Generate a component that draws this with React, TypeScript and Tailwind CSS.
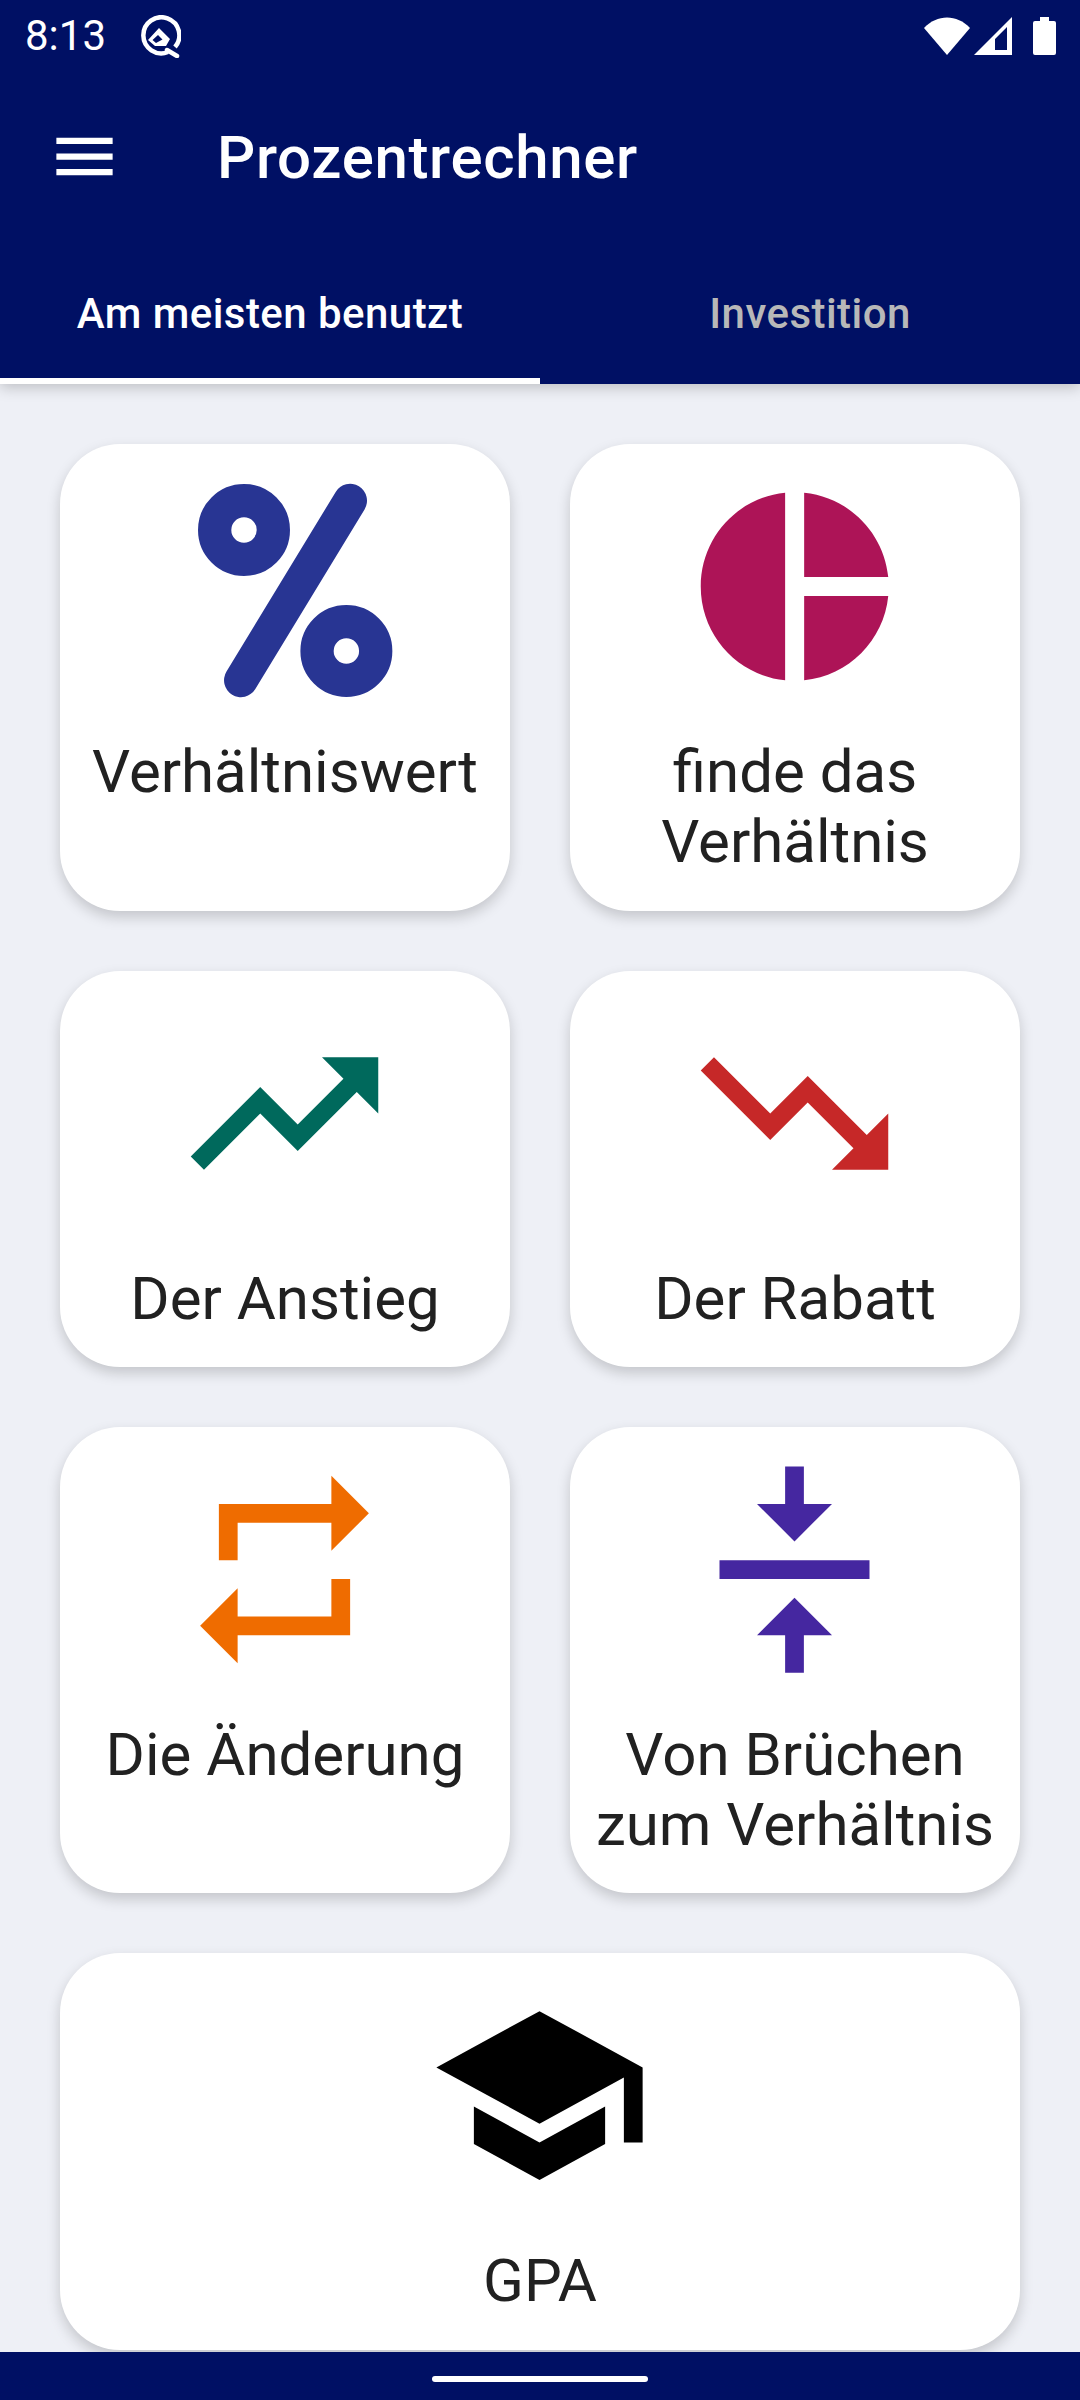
import type { ReactNode } from "react";

type Shortcut = {
  label: string;
  color: string;
  icon: ReactNode;
  wide?: boolean;
};

function PercentGlyph() {
  return (
    <>
      <circle cx="7.68" cy="5.97" r="3.13" fill="none" stroke="currentColor" strokeWidth="3.55" />
      <circle cx="18.6" cy="18.88" r="3.13" fill="none" stroke="currentColor" strokeWidth="3.55" />
      <line x1="19" y1="2.85" x2="7.35" y2="22" stroke="currentColor" strokeWidth="3.6" strokeLinecap="round" />
    </>
  );
}

const shortcuts: Shortcut[] = [
  { label: "Verhältniswert", color: "text-[#283593]", icon: <PercentGlyph /> },
  {
    label: "finde das Verhältnis",
    color: "text-[#ad1457]",
    icon: <path d="M11 2v20c-5.07-.5-9-4.79-9-10s3.93-9.5 9-10zm2.03 0v8.99H22c-.47-4.74-4.24-8.52-8.97-8.99zm0 11.01V22c4.74-.47 8.5-4.25 8.97-8.99h-8.97z" />,
  },
  {
    label: "Der Anstieg",
    color: "text-[#00695c]",
    icon: <path d="M16 6l2.29 2.29-4.88 4.88-4-4L2 16.59 3.41 18l6-6 4 4 6.3-6.29L22 12V6z" />,
  },
  {
    label: "Der Rabatt",
    color: "text-[#c62828]",
    icon: <path d="M16 18l2.29-2.29-4.88-4.88-4 4L2 7.41 3.41 6l6 6 4-4 6.3 6.29L22 12v6z" />,
  },
  {
    label: "Die Änderung",
    color: "text-[#ef6c00]",
    icon: <path d="M7 7h10v3l4-4-4-4v3H5v6h2V7zm10 10H7v-3l-4 4 4 4v-3h12v-6h-2v4z" />,
  },
  {
    label: "Von Brüchen zum Verhältnis",
    color: "text-[#4527a0]",
    icon: <path d="M8 19h3v4h2v-4h3l-4-4-4 4zm8-14h-3V1h-2v4H8l4 4 4-4zM4 11v2h16v-2H4z" />,
  },
  {
    label: "GPA",
    color: "text-black",
    wide: true,
    icon: <path d="M5 13.18v4L12 21l7-3.82v-4L12 17l-7-3.82zM12 3L1 9l11 6 9-4.91V17h2V9L12 3z" />,
  },
];

function StatusBar() {
  return (
    <div className="flex h-[72px] items-center justify-between pl-[25px] pr-[24px] text-white">
      <div className="flex items-center gap-[34px]">
        <span className="text-[42px] leading-none">8:13</span>
        <svg viewBox="0 0 41 43" className="h-[43px] w-[41px]">
          <path d="M28 37 A18 18 0 1 1 35 32" fill="none" stroke="white" strokeWidth="4.5" />
          <path d="M27 35 L37 41" stroke="white" strokeWidth="4.5" strokeLinecap="round" />
          <path
            fillRule="evenodd"
            d="M19 13 L30 24 L26 31 L15 31 L8 25 Z M18 20 L12.5 25 L16 28 L22.5 24.5 Z"
            fill="white"
          />
        </svg>
      </div>
      <div className="flex items-center">
        <svg viewBox="0 0 46 38" className="h-[38px] w-[46px]">
          <path d="M0 11 C13 -3 33 -3 46 11 L23 38 Z" fill="white" />
        </svg>
        <svg viewBox="0 0 38 38" className="ml-[4px] h-[38px] w-[38px]">
          <path fillRule="evenodd" d="M38 0 V38 H0 Z M33 10 L21 22 V33 H33 Z" fill="white" />
        </svg>
        <svg viewBox="0 0 23 38" className="ml-[21px] h-[38px] w-[23px]">
          <path d="M7 0 H16 V4 H21 A2 2 0 0 1 23 6 V36 A2 2 0 0 1 21 38 H2 A2 2 0 0 1 0 36 V6 A2 2 0 0 1 2 4 H7 Z" fill="white" />
        </svg>
      </div>
    </div>
  );
}

function Header() {
  return (
    <header className="z-10 bg-[#001064] shadow-[0_3px_14px_rgba(0,0,0,0.22)]">
      <StatusBar />
      <div className="flex h-[168px] items-center pl-[47px] text-white">
        <svg viewBox="0 0 24 24" fill="white" className="h-[75px] w-[75px]">
          <path d="M3 18h18v-2H3v2zm0-5h18v-2H3v2zm0-7v2h18V6H3z" />
        </svg>
        <h1 className="ml-[95px] pt-[3px] text-[60px] leading-none font-medium tracking-[0.65px]">Prozentrechner</h1>
      </div>
      <nav className="flex h-[144px]">
        <div className="flex flex-1 items-center justify-center border-b-[6px] border-white pt-[9px] text-[42px] font-medium tracking-[0.45px] text-white">
          Am meisten benutzt
        </div>
        <div className="flex flex-1 items-center justify-center pt-[3px] text-[42px] font-medium tracking-[0.45px] text-[#b8b8b8]">
          Investition
        </div>
      </nav>
    </header>
  );
}

function ShortcutCard({ item }: { item: Shortcut }) {
  return (
    <button
      type="button"
      className={`flex flex-col items-center rounded-[60px] bg-white px-[15px] pt-[30px] pb-[33px] shadow-[0_6px_14px_rgba(0,0,0,0.18)] ${
        item.wide ? "col-span-2" : ""
      }`}
    >
      <svg viewBox="0 0 24 24" fill="currentColor" className={`mr-[2px] h-[225px] w-[225px] ${item.color}`}>
        {item.icon}
      </svg>
      <span className="mt-[38px] text-center text-[60px] leading-[70.3px] text-[#212121]">{item.label}</span>
    </button>
  );
}

export default function App() {
  return (
    <div className="flex h-[2400px] flex-col overflow-hidden bg-[#eef0f6] font-[Roboto,sans-serif]">
      <Header />
      <main className="grid flex-1 grid-cols-2 content-start gap-[60px] overflow-hidden px-[60px] pt-[60px]">
        {shortcuts.map((item) => (
          <ShortcutCard key={item.label} item={item} />
        ))}
      </main>
      <footer className="z-10 flex h-[48px] items-start justify-center bg-[#001064] pt-[24px]">
        <div className="h-[6px] w-[216px] rounded-full bg-white" />
      </footer>
    </div>
  );
}
